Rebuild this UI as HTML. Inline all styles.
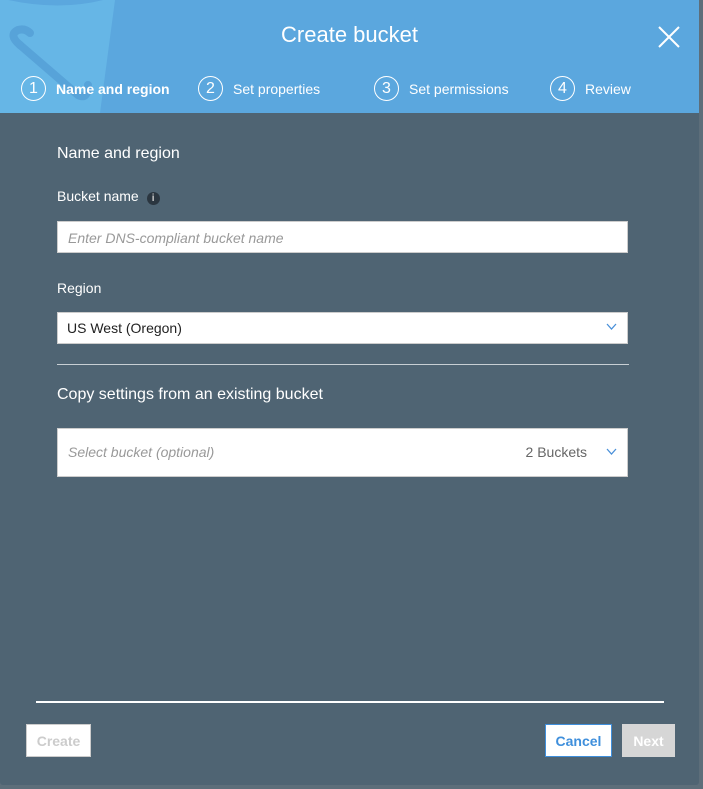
<!DOCTYPE html>
<html><head><style>
*{margin:0;padding:0;box-sizing:border-box}
body{width:703px;height:789px;background:#5d6e7a;font-family:"Liberation Sans",Arial,sans-serif;position:relative;overflow:hidden}
.modal{position:absolute;left:0;top:0;width:699px;height:785px;background:#4f6473;border-radius:0 0 3px 3px;overflow:hidden}
.hdr{position:absolute;left:0;top:0;width:699px;height:113px;background:#5ba7de;overflow:hidden}
.title{position:absolute;top:22px;left:0;width:699px;text-align:center;color:#fff;font-size:22px}
.step{position:absolute;top:76px;color:#fff;font-size:14px;display:flex;align-items:center}
.step .c{width:25px;height:25px;border:1.5px solid #fff;border-radius:50%;display:flex;align-items:center;justify-content:center;font-size:16px;margin-right:10px}
.lbl{position:absolute;color:#fff;font-size:14px;left:57px}
.in{position:absolute;left:57px;width:571px;background:#fff;border:1px solid #ccc;font-size:14px}
.ph{color:#999;font-style:italic}
.chev{position:absolute;right:10px;top:50%;margin-top:-5px}
.btn{position:absolute;top:724px;height:33px;font-size:14px;display:flex;align-items:center;justify-content:center;font-weight:bold}
</style></head><body>
<div class="modal">
<div class="hdr">
<svg width="280" height="113" style="position:absolute;left:0;top:0">
<path d="M0 0 L115 0 L100 113 L0 113Z" fill="#66b6e6"/>
<path d="M0 -5 Q60 10 110 -5" stroke="#5ba7de" stroke-width="6" fill="none"/>
<path d="M20 45 L78 95 Q88 100 88 85" stroke="#57a3d9" stroke-width="8" fill="none" stroke-linecap="round"/>
<path d="M20 45 Q8 35 18 30 Q25 28 30 33" stroke="#57a3d9" stroke-width="8" fill="none" stroke-linecap="round"/>
</svg>
<div class="title">Create bucket</div>
<svg width="22" height="22" style="position:absolute;left:658px;top:26px"><path d="M1 1L21 21M21 1L1 21" stroke="#fff" stroke-width="2"/></svg>
<div class="step" style="left:21px;font-weight:bold"><span class="c" style="font-weight:normal">1</span>Name and region</div>
<div class="step" style="left:198px"><span class="c">2</span>Set properties</div>
<div class="step" style="left:374px"><span class="c">3</span>Set permissions</div>
<div class="step" style="left:550px"><span class="c">4</span>Review</div>
</div>
<div class="lbl" style="top:145px;font-size:16px">Name and region</div>
<div class="lbl" style="top:188px">Bucket name <span style="display:inline-block;width:13px;height:13px;border-radius:50%;background:#2b3640;color:#ccc;font-size:10px;text-align:center;line-height:13px;margin-left:4px;font-weight:bold">i</span></div>
<div class="in" style="top:221px;height:32px;padding:8px 10px"><span class="ph">Enter DNS-compliant bucket name</span></div>
<div class="lbl" style="top:280px">Region</div>
<div class="in" style="top:312px;height:32px;padding:7px 9px;color:#222">US West (Oregon)<svg class="chev" width="11" height="8"><path d="M1 1L5.5 6L10 1" stroke="#4a90d9" fill="none" stroke-width="1.3"/></svg></div>
<div style="position:absolute;left:57px;top:364px;width:572px;height:1px;background:#c8cfd4"></div>
<div class="lbl" style="top:386px;font-size:16px">Copy settings from an existing bucket</div>
<div class="in" style="top:428px;height:49px;padding:15px 10px"><span class="ph">Select bucket (optional)</span><span style="position:absolute;right:40px;top:15px;color:#666">2 Buckets</span><svg class="chev" width="11" height="8"><path d="M1 1L5.5 6L10 1" stroke="#4a90d9" fill="none" stroke-width="1.3"/></svg></div>
<div style="position:absolute;left:36px;top:701px;width:628px;height:2px;background:#fff"></div>
<div class="btn" style="left:26px;width:65px;background:#fff;border:1px solid #ccc;color:#ccc">Create</div>
<div class="btn" style="left:545px;width:67px;background:#fff;border:1px solid #3f8fdc;color:#3f8fdc">Cancel</div>
<div class="btn" style="left:622px;width:53px;background:#d6d6d6;color:#fff">Next</div>
</div>
</body></html>
